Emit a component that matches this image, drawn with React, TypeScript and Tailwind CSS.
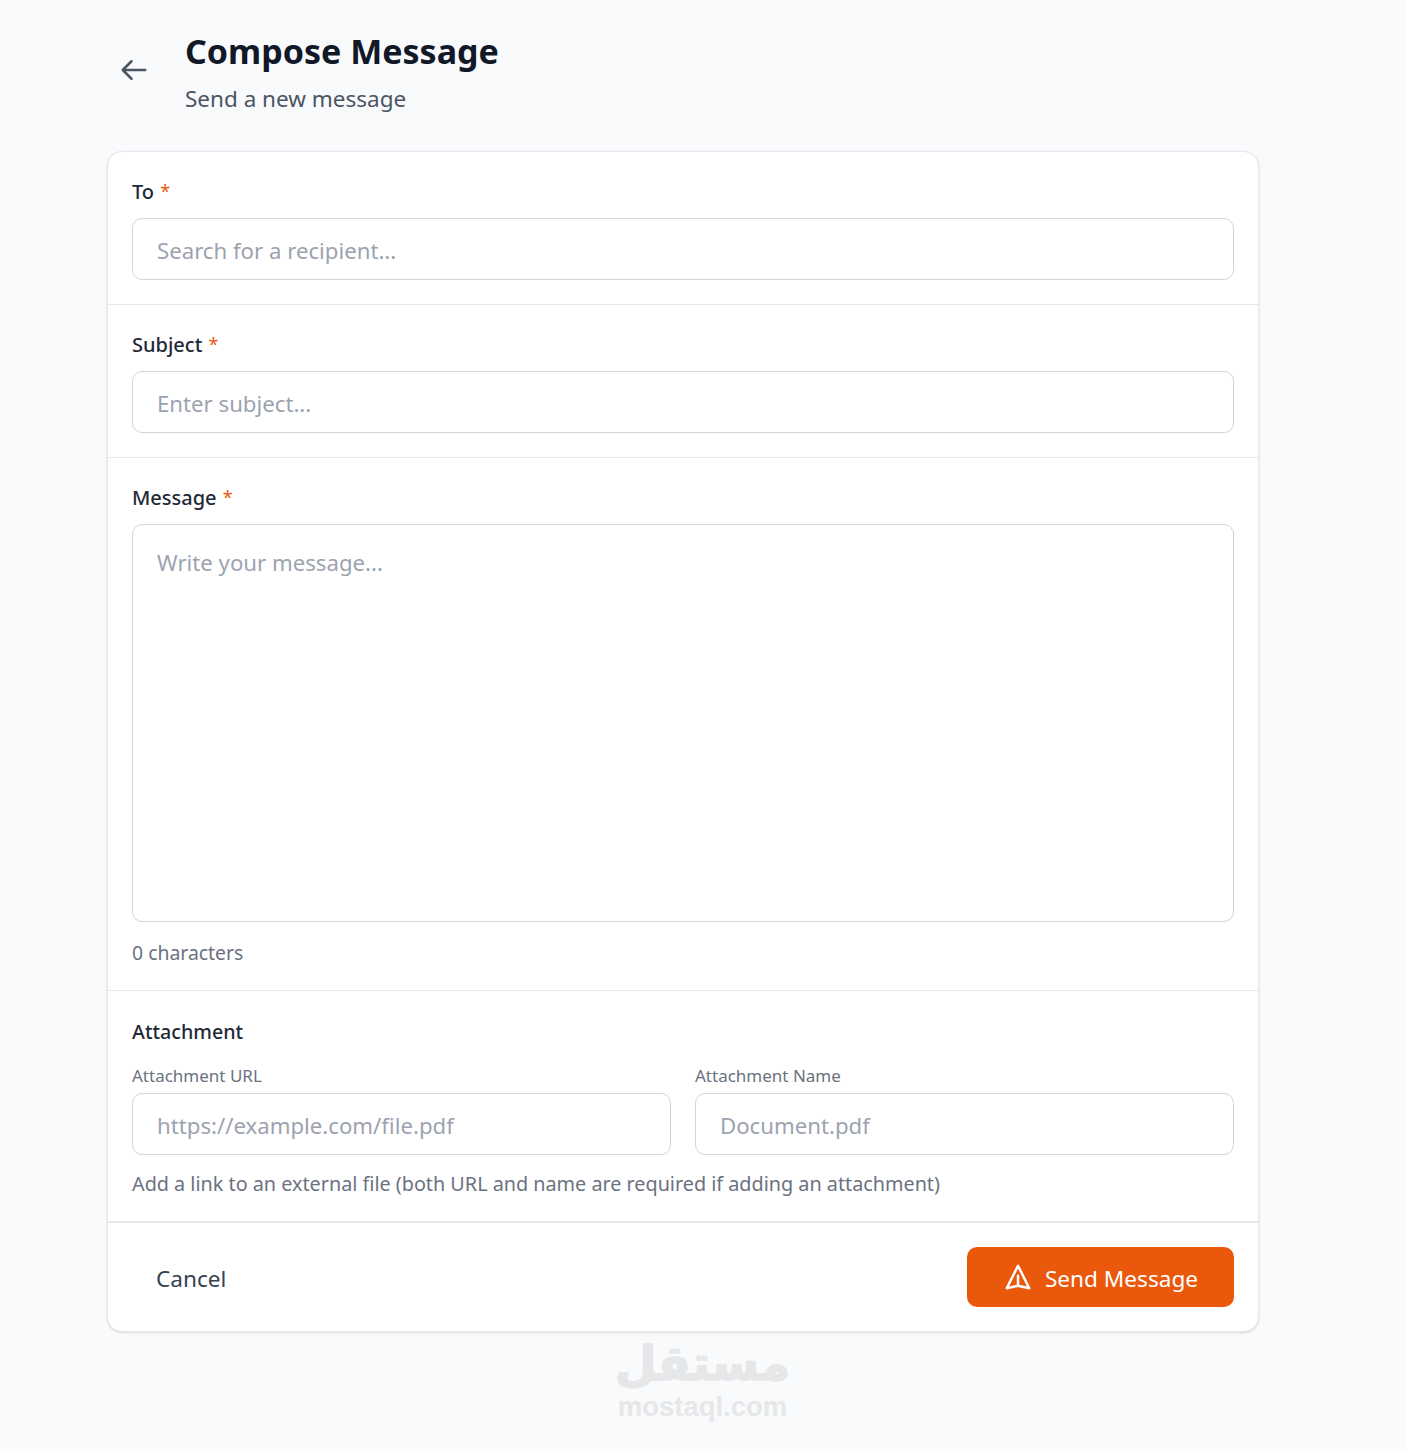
import React from 'react';

const inputCls =
    "w-full h-[62px] rounded-[10px] border border-[#d1d5db] bg-white px-6 pt-[2px] text-[22.2px] text-[#111827] placeholder:text-[#9ca3af] outline-none";

const Label = ({ text }: { text: string }) => (
    <label className="block h-[24px] mb-[14px] text-[#1f2937] text-[20px] leading-[24px] font-medium">
        {text} <span className="relative -top-[1px] text-[#ea580c] text-[18px] ml-[1px] font-normal">*</span>
    </label>
);

const App: React.FC = () => {
    return (
        <div className="min-h-[1451px] bg-[#f9fafb] pl-[107px] pt-[25px] font-['Noto_Sans',sans-serif]" style={{ width: 1406 }}>
            <div className="w-[1152px]">
                <div className="flex items-start h-[126px]">
                    <button className="ml-[12px] mt-[30px] text-[#4b5563]">
                        <svg className="w-[30px] h-[30px]" fill="none" viewBox="0 0 24 24" stroke="currentColor" strokeWidth={2}>
                            <path strokeLinecap="round" strokeLinejoin="round" d="M10 19l-7-7m0 0l7-7m-7 7h18" />
                        </svg>
                    </button>
                    <div className="ml-[36px]">
                        <h1 className="text-[34px] leading-[52px] font-bold text-[#111827]">Compose Message</h1>
                        <p className="text-[22.5px] leading-[44px] text-[#4b5563]">Send a new message</p>
                    </div>
                </div>

                <form className="bg-white rounded-[15px] border border-[#e5e7eb] shadow-sm">
                    <div className="px-6 pt-[28px] pb-6 border-b border-[#e5e7eb]">
                        <Label text="To" />
                        <input className={inputCls} placeholder="Search for a recipient..." />
                    </div>
                    <div className="px-6 pt-[28px] pb-6 border-b border-[#e5e7eb]">
                        <Label text="Subject" />
                        <input className={inputCls} placeholder="Enter subject..." />
                    </div>
                    <div className="px-6 pt-[28px] pb-6 border-b border-[#e5e7eb]">
                        <Label text="Message" />
                        <textarea className="block w-full h-[398px] resize-none rounded-[10px] border border-[#d1d5db] bg-white px-6 py-[23px] text-[22.2px] leading-[30px] placeholder:text-[#9ca3af] outline-none" placeholder="Write your message..." />
                        <p className="mt-[18px] text-[19.4px] leading-[26px] text-[#6b7280]">0 characters</p>
                    </div>
                    <div className="px-6 pt-[28px] pb-6 border-b-2 border-[#e5e7eb]">
                        <h3 className="text-[19.7px] leading-[26px] font-medium text-[#1f2937] mb-[20px]">Attachment</h3>
                        <div className="grid grid-cols-2 gap-6">
                            <div>
                                <label className="block text-[17px] leading-[22px] mb-[6px] text-[#6b7280]">Attachment URL</label>
                                <input className={inputCls} placeholder="https://example.com/file.pdf" />
                            </div>
                            <div>
                                <label className="block text-[17px] leading-[22px] mb-[6px] text-[#6b7280]">Attachment Name</label>
                                <input className={inputCls} placeholder="Document.pdf" />
                            </div>
                        </div>
                        <p className="mt-[16px] text-[19.8px] leading-[26px] text-[#6b7280]">Add a link to an external file (both URL and name are required if adding an attachment)</p>
                    </div>
                    <div className="flex items-center justify-between px-6 py-6">
                        <button type="button" className="px-6 pt-[4px] text-[22.6px] text-[#374151]">Cancel</button>
                        <button type="button" className="flex items-center justify-center gap-[12px] w-[267px] h-[60px] rounded-[10px] bg-[#ea580c] text-white text-[22.6px]">
                            <svg className="w-[30px] h-[30px]" fill="none" viewBox="0 0 24 24" stroke="currentColor" strokeWidth={2}>
                                <path strokeLinecap="round" strokeLinejoin="round" d="M12 19l9 2-9-18-9 18 9-2zm0 0v-8" />
                            </svg>
                            <span className="pt-[4px]">Send Message</span>
                        </button>
                    </div>
                </form>

                <div className="flex flex-col items-center mt-[4px] ml-[39px] select-none text-[#e5e7e9]">
                    <span className="font-['DejaVu_Sans',sans-serif] font-bold text-[48px] leading-[54px] [-webkit-text-stroke:1.5px_#e5e7e9]" dir="rtl">مستقل</span>
                    <span className="mt-[4px] font-['Liberation_Sans',sans-serif] font-bold text-[27.5px] leading-[26px]">mostaql.com</span>
                </div>
            </div>
        </div>
    );
};

export default App;
